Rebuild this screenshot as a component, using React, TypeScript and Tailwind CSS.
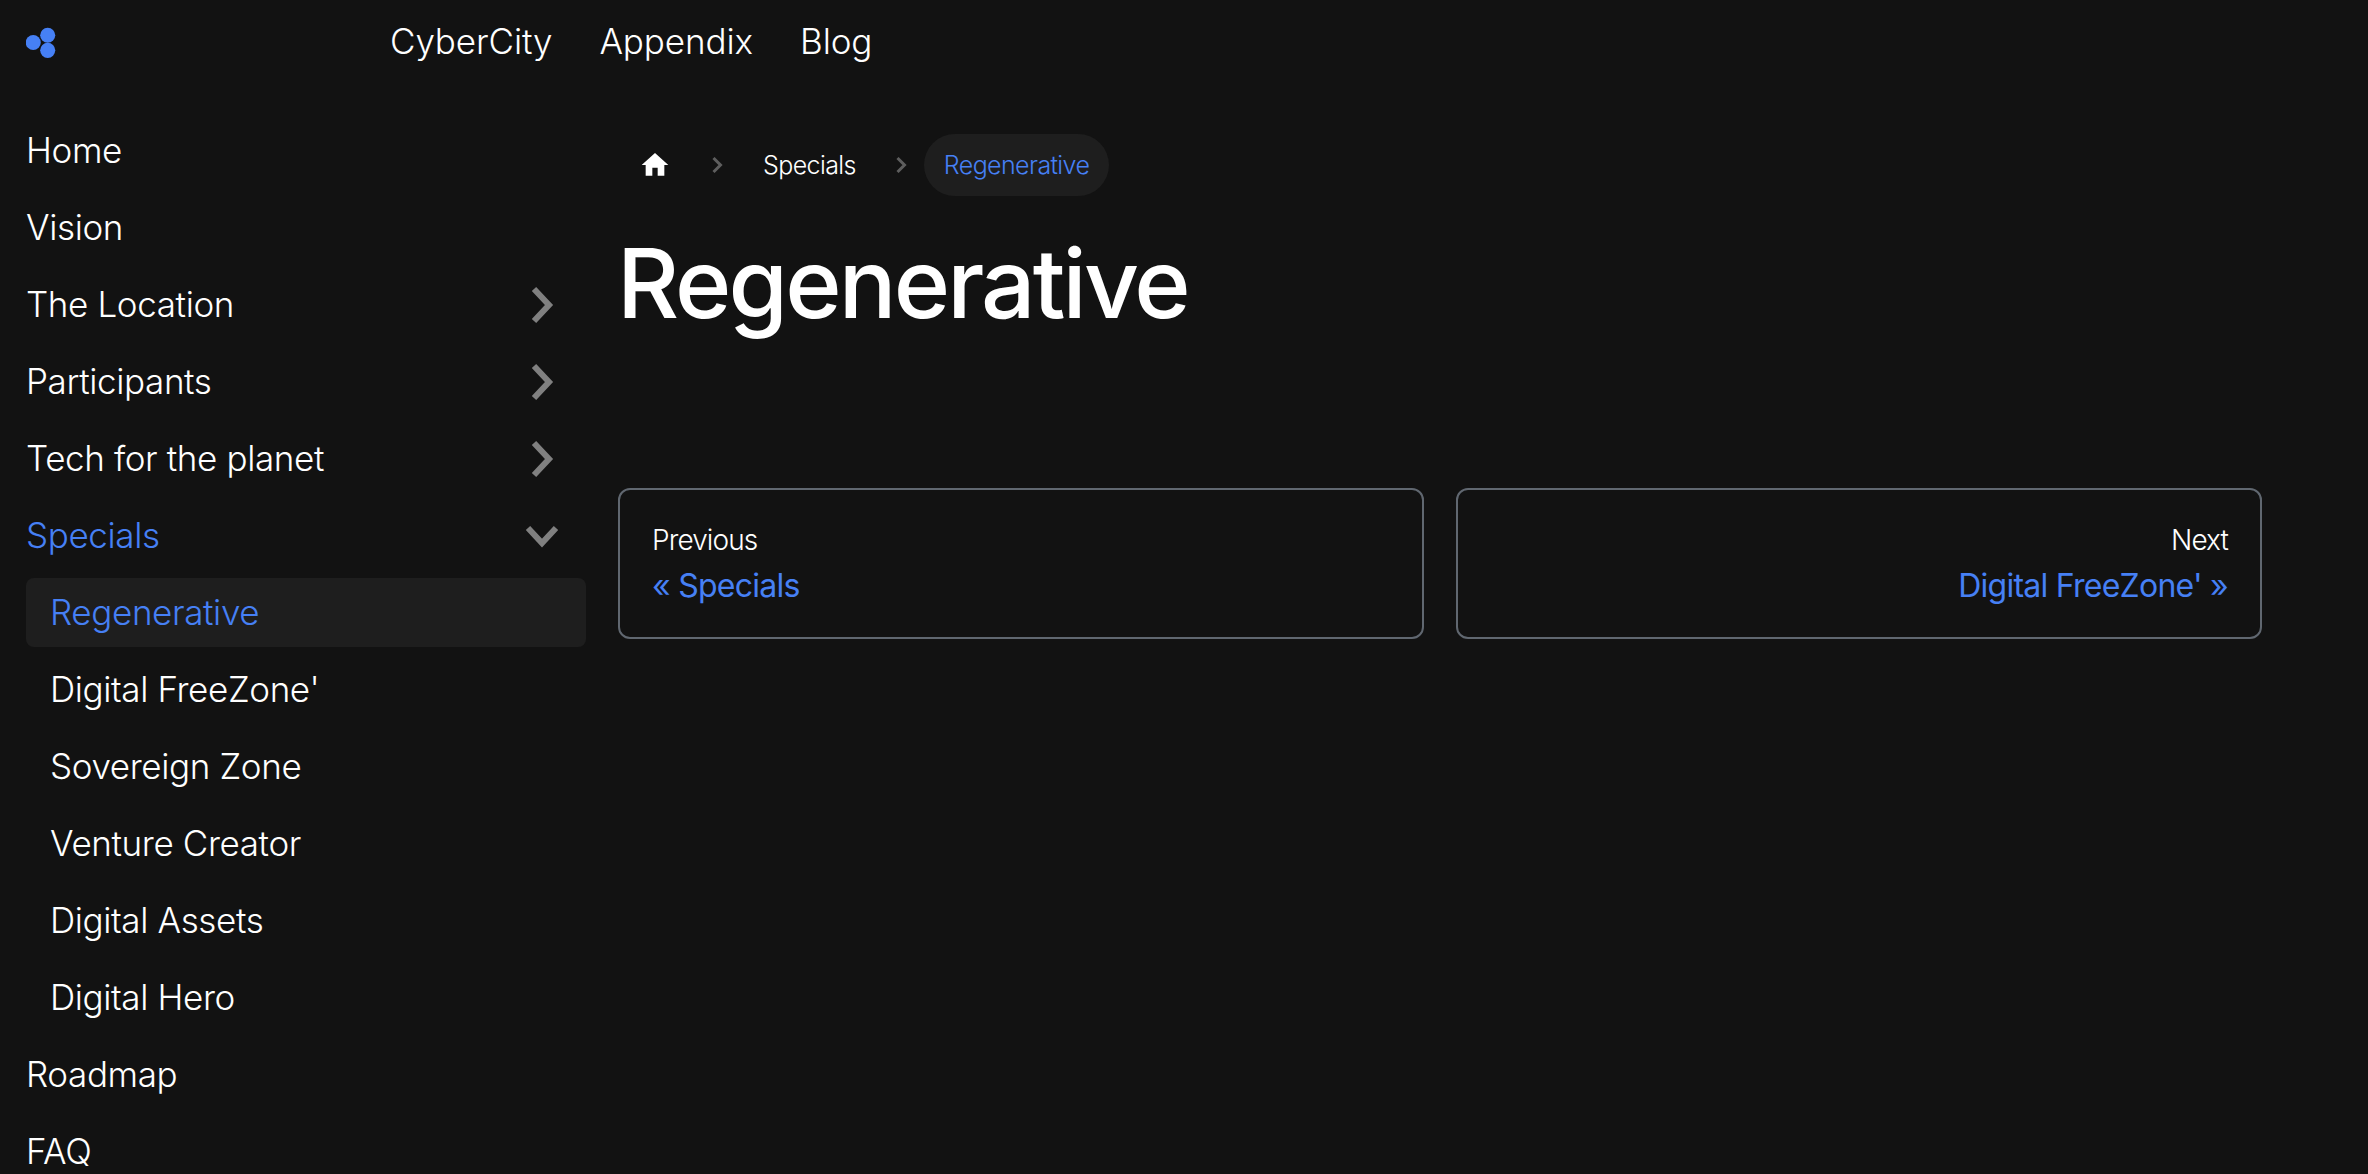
const sidebarItems = [
  { label: "Home" },
  { label: "Vision" },
  { label: "The Location", arrow: true },
  { label: "Participants", arrow: true },
  { label: "Tech for the planet", arrow: true },
];

const specialsItems = ["Digital FreeZone'", "Sovereign Zone", "Venture Creator", "Digital Assets", "Digital Hero"];

function Logo() {
  return (
    <svg width="31" height="31" viewBox="0 0 30 30" className="text-[#4680f5]" fill="currentColor">
      <circle cx="7" cy="15" r="7.3" />
      <circle cx="21" cy="8" r="7.3" />
      <circle cx="21" cy="22.6" r="7.3" />
    </svg>
  );
}

function ArrowRight() {
  return (
    <svg width="24" height="38" viewBox="0 0 24 38" fill="none" className="mr-[32px] text-[#808080]">
      <path d="M4 3l15 16L4 35" stroke="currentColor" strokeWidth="6" />
    </svg>
  );
}

function ArrowDown() {
  return (
    <svg width="34" height="24" viewBox="0 0 34 24" fill="none" className="mr-[27px] text-[#808080]">
      <path d="M3 4l14 15L31 4" stroke="currentColor" strokeWidth="6" />
    </svg>
  );
}

function CrumbArrow() {
  return (
    <svg width="12" height="18" viewBox="0 0 12 18" fill="none" className="text-[#5e5e5e]">
      <path d="M2.5 2l7 7-7 7" stroke="currentColor" strokeWidth="3" />
    </svg>
  );
}

function SidebarRow({ label, arrow }: { label: string; arrow?: boolean }) {
  return (
    <div className="flex h-[69px] items-center justify-between text-white">
      <span>{label}</span>
      {arrow && <ArrowRight />}
    </div>
  );
}

export default function App() {
  return (
    <div className="h-[1174px] overflow-hidden bg-[#121212] font-['Inter',sans-serif] text-white">
      <header className="flex h-[84px] items-center pl-[26px]">
        <Logo />
        <nav className="ml-[333px] -mt-[2px] flex gap-[47px] text-[35px] font-[350] tracking-[-0.1px]">
          <span>CyberCity</span>
          <span>Appendix</span>
          <span>Blog</span>
        </nav>
      </header>

      <div className="flex">
        <aside className="flex w-[586px] shrink-0 flex-col gap-[8px] pl-[26px] pt-[32px] text-[35px] font-[350] tracking-[-0.38px]">
          {sidebarItems.map((item) => (
            <SidebarRow key={item.label} label={item.label} arrow={item.arrow} />
          ))}
          <div className="flex h-[69px] items-center justify-between text-[#4680f5]">
            <span>Specials</span>
            <ArrowDown />
          </div>
          <div className="flex h-[69px] items-center rounded-[8px] bg-[#1e1e1e] pl-[24px] text-[#4680f5]">Regenerative</div>
          {specialsItems.map((label) => (
            <div key={label} className="flex h-[69px] items-center pl-[24px]">
              {label}
            </div>
          ))}
          <SidebarRow label="Roadmap" />
          <SidebarRow label="FAQ" />
        </aside>

        <main className="ml-[32px] w-[1644px] pt-[50px]">
          <div className="flex h-[62px] items-center text-[25px] font-[350] tracking-[-0.6px]">
            <svg width="32" height="32" viewBox="0 0 24 24" fill="currentColor" className="ml-[21px]">
              <path d="M10 20v-6h4v6h5v-8h3L12 3 2 12h3v8z" />
            </svg>
            <span className="ml-[40px]">
              <CrumbArrow />
            </span>
            <span className="ml-[40px] mt-[2px]">Specials</span>
            <span className="ml-[39px]">
              <CrumbArrow />
            </span>
            <span className="ml-[17px] flex h-[62px] items-center rounded-full bg-[#1e1e1e] px-[20px] pt-[2px] text-[#4680f5]">Regenerative</span>
          </div>
          <h1 className="-ml-[1px] mt-[27px] text-[96px] font-[470] leading-[120px] tracking-[-2.85px]">Regenerative</h1>
          <div className="mt-[145px] grid grid-cols-2 gap-[32px]">
            <div className="flex h-[151px] flex-col justify-center rounded-[12px] border-2 border-[#606770] px-[32px]">
              <span className="text-[28px] font-[350] leading-[42px] tracking-[-0.9px]">Previous</span>
              <span className="mt-[2px] text-[32px] font-[400] leading-[46px] tracking-[-0.75px] text-[#4680f5]">« Specials</span>
            </div>
            <div className="flex h-[151px] flex-col justify-center rounded-[12px] border-2 border-[#606770] px-[32px] text-right">
              <span className="text-[28px] font-[350] leading-[42px] tracking-[-0.9px]">Next</span>
              <span className="mt-[2px] text-[32px] font-[400] leading-[46px] tracking-[-0.75px] text-[#4680f5]">Digital FreeZone' »</span>
            </div>
          </div>
        </main>
      </div>
    </div>
  );
}
